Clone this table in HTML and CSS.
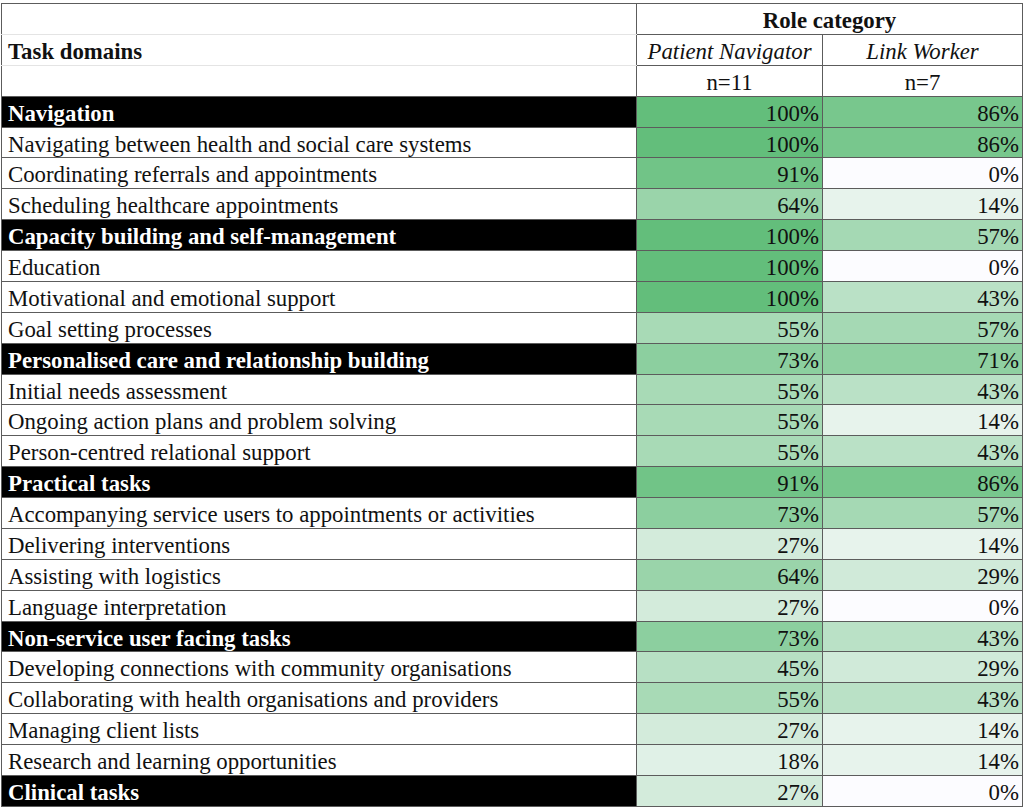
FILE: index.html
```html
<!DOCTYPE html>
<html lang="en">
<head>
<meta charset="utf-8">
<title>Task domains by role category</title>
<link rel="stylesheet" href="styles.css">
</head>
<body>
<table class="tbl">
  <colgroup>
    <col class="c-task">
    <col class="c-pn">
    <col class="c-lw">
  </colgroup>
  <thead>
    <tr class="h1">
      <th class="lead lead-top"></th>
      <th class="role" colspan="2">Role category</th>
    </tr>
    <tr class="h2">
      <th class="lead lead-mid">Task domains</th>
      <th class="role-name">Patient Navigator</th>
      <th class="role-name">Link Worker</th>
    </tr>
    <tr class="h3">
      <th class="lead lead-bot"></th>
      <th class="n">n=11</th>
      <th class="n">n=7</th>
    </tr>
  </thead>
  <tbody>
    <tr class="domain"><td class="name">Navigation</td><td class="v" style="background:rgb(99,190,123)">100%</td><td class="v" style="background:rgb(120,199,141)">86%</td></tr>
    <tr><td class="name">Navigating between health and social care systems</td><td class="v" style="background:rgb(99,190,123)">100%</td><td class="v" style="background:rgb(120,199,141)">86%</td></tr>
    <tr><td class="name">Coordinating referrals and appointments</td><td class="v" style="background:rgb(113,196,135)">91%</td><td class="v" style="background:rgb(252,252,255)">0%</td></tr>
    <tr><td class="name">Scheduling healthcare appointments</td><td class="v" style="background:rgb(154,212,170)">64%</td><td class="v" style="background:rgb(231,243,236)">14%</td></tr>
    <tr class="domain"><td class="name">Capacity building and self-management</td><td class="v" style="background:rgb(99,190,123)">100%</td><td class="v" style="background:rgb(165,217,180)">57%</td></tr>
    <tr><td class="name">Education</td><td class="v" style="background:rgb(99,190,123)">100%</td><td class="v" style="background:rgb(252,252,255)">0%</td></tr>
    <tr><td class="name">Motivational and emotional support</td><td class="v" style="background:rgb(99,190,123)">100%</td><td class="v" style="background:rgb(186,225,198)">43%</td></tr>
    <tr><td class="name">Goal setting processes</td><td class="v" style="background:rgb(168,218,182)">55%</td><td class="v" style="background:rgb(165,217,180)">57%</td></tr>
    <tr class="domain"><td class="name">Personalised care and relationship building</td><td class="v" style="background:rgb(140,207,159)">73%</td><td class="v" style="background:rgb(143,208,161)">71%</td></tr>
    <tr><td class="name">Initial needs assessment</td><td class="v" style="background:rgb(168,218,182)">55%</td><td class="v" style="background:rgb(186,225,198)">43%</td></tr>
    <tr><td class="name">Ongoing action plans and problem solving</td><td class="v" style="background:rgb(168,218,182)">55%</td><td class="v" style="background:rgb(231,243,236)">14%</td></tr>
    <tr><td class="name">Person-centred relational support</td><td class="v" style="background:rgb(168,218,182)">55%</td><td class="v" style="background:rgb(186,225,198)">43%</td></tr>
    <tr class="domain"><td class="name">Practical tasks</td><td class="v" style="background:rgb(113,196,135)">91%</td><td class="v" style="background:rgb(120,199,141)">86%</td></tr>
    <tr><td class="name">Accompanying service users to appointments or activities</td><td class="v" style="background:rgb(140,207,159)">73%</td><td class="v" style="background:rgb(165,217,180)">57%</td></tr>
    <tr><td class="name">Delivering interventions</td><td class="v" style="background:rgb(211,235,219)">27%</td><td class="v" style="background:rgb(231,243,236)">14%</td></tr>
    <tr><td class="name">Assisting with logistics</td><td class="v" style="background:rgb(154,212,170)">64%</td><td class="v" style="background:rgb(208,234,217)">29%</td></tr>
    <tr><td class="name">Language interpretation</td><td class="v" style="background:rgb(211,235,219)">27%</td><td class="v" style="background:rgb(252,252,255)">0%</td></tr>
    <tr class="domain"><td class="name">Non-service user facing tasks</td><td class="v" style="background:rgb(140,207,159)">73%</td><td class="v" style="background:rgb(186,225,198)">43%</td></tr>
    <tr><td class="name">Developing connections with community organisations</td><td class="v" style="background:rgb(183,224,196)">45%</td><td class="v" style="background:rgb(208,234,217)">29%</td></tr>
    <tr><td class="name">Collaborating with health organisations and providers</td><td class="v" style="background:rgb(168,218,182)">55%</td><td class="v" style="background:rgb(186,225,198)">43%</td></tr>
    <tr><td class="name">Managing client lists</td><td class="v" style="background:rgb(211,235,219)">27%</td><td class="v" style="background:rgb(231,243,236)">14%</td></tr>
    <tr><td class="name">Research and learning opportunities</td><td class="v" style="background:rgb(224,241,231)">18%</td><td class="v" style="background:rgb(231,243,236)">14%</td></tr>
    <tr class="domain"><td class="name">Clinical tasks</td><td class="v" style="background:rgb(211,235,219)">27%</td><td class="v" style="background:rgb(252,252,255)">0%</td></tr>
  </tbody>
</table>
</body>
</html>
```

FILE: styles.css
```css
html, body {
  margin: 0;
  padding: 0;
  background: #ffffff;
}

body {
  padding: 3px 0 0 1px;
  font-family: "Liberation Serif", "Times New Roman", serif;
  color: #111;
}

.tbl {
  border-collapse: collapse;
  table-layout: fixed;
  width: 1021px;
  font-size: 22.8px;
  line-height: 1;
  border: 1px solid #6a6a6a;
}

.c-task { width: 635px; }
.c-pn { width: 186px; }
.c-lw { width: 200px; }

.tbl tr {
  height: 30.88px;
}

.tbl th,
.tbl td {
  padding: 0 0 1px 0;
  border: 1px solid #5c5c5c;
  vertical-align: bottom;
  white-space: nowrap;
  overflow: hidden;
}

.tbl .lead {
  text-align: left;
  padding-left: 6px;
  font-weight: bold;
  border-left: 1px solid #5c5c5c;
}

.tbl .lead-top { border-bottom: 1px solid #e4e4e4; }
.tbl .lead-mid { border-top: 1px solid #e4e4e4; border-bottom: 1px solid #e4e4e4; }
.tbl .lead-bot { border-top: 1px solid #e4e4e4; }

.tbl .role {
  font-weight: bold;
  text-align: center;
}

.tbl .role-name {
  font-weight: normal;
  font-style: italic;
  text-align: center;
}

.tbl .n {
  font-weight: normal;
  text-align: center;
}

.tbl .name {
  text-align: left;
  padding-left: 6px;
}

.tbl .domain .name {
  background: #000000;
  color: #ffffff;
  font-weight: bold;
}

.tbl .v {
  text-align: right;
  padding-right: 3px;
}
```
